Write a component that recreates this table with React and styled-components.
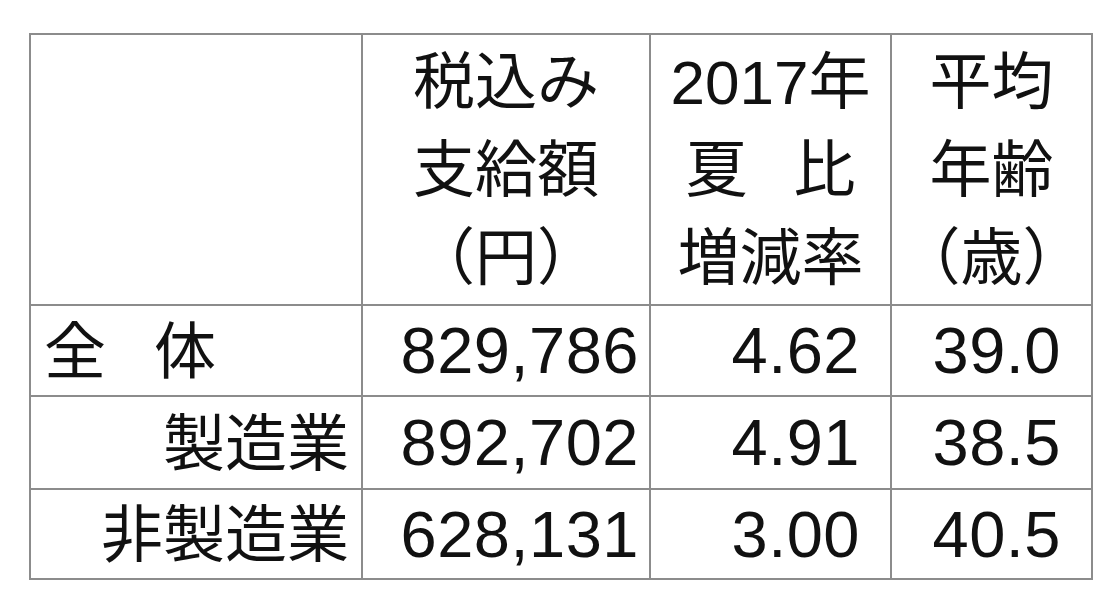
import React from "react";
import styled, { createGlobalStyle } from "styled-components";

const GlobalStyle = createGlobalStyle`
  html, body {
    margin: 0;
    padding: 0;
    background: #ffffff;
  }
  body {
    font-family: "Liberation Sans", "Noto Sans CJK JP", sans-serif;
    color: #111;
  }
`;

const Page = styled.div`
  width: 1106px;
  height: 600px;
  padding: 33px 0 0 29px;
  box-sizing: border-box;
`;

const Table = styled.table`
  border-collapse: collapse;
  table-layout: fixed;
  width: 1062px;
  font-size: 64px;
  color: #111;
`;

const Cell = styled.td`
  border: 2px solid #8c8c8c;
  padding: 0;
  vertical-align: middle;
  white-space: nowrap;
  line-height: 1;
`;

const HeadCell = styled(Cell)`
  height: 267px;
  text-align: center;
  font-size: 62px;
  line-height: 88px;
  padding-top: 2px;
`;

const HeadLine = styled.div`
  display: flex;
  justify-content: center;
  gap: ${(p) => p.$gap || 0}px;
`;

const LabelCell = styled(Cell)`
  height: ${(p) => p.$h}px;
  font-size: 62px;
  text-align: ${(p) => (p.$left ? "left" : "right")};
  padding: 4px 12px 0 13px;
`;

const Spaced = styled.span`
  display: inline-flex;
  gap: ${(p) => p.$gap}px;
`;

const NumCell = styled(Cell)`
  text-align: right;
  font-size: 65px;
  letter-spacing: 0.5px;
  padding-right: ${(p) => p.$pr}px;
`;

const rows = [
  { label: ["全", "体"], left: true, h: 85, values: ["829,786", "4.62", "39.0"] },
  { label: ["製造業"], h: 87, values: ["892,702", "4.91", "38.5"] },
  { label: ["非製造業"], h: 84, values: ["628,131", "3.00", "40.5"] },
];

const numPadding = [10, 30, 30];

export default function App() {
  return (
    <Page>
      <GlobalStyle />
      <Table>
        <colgroup>
          <col style={{ width: 332 }} />
          <col style={{ width: 288 }} />
          <col style={{ width: 241 }} />
          <col style={{ width: 201 }} />
        </colgroup>
        <tbody>
          <tr>
            <HeadCell />
            <HeadCell>
              <HeadLine>税込み</HeadLine>
              <HeadLine>支給額</HeadLine>
              <HeadLine>（円）</HeadLine>
            </HeadCell>
            <HeadCell>
              <HeadLine>2017年</HeadLine>
              <HeadLine $gap={46}>
                <span>夏</span>
                <span>比</span>
              </HeadLine>
              <HeadLine>増減率</HeadLine>
            </HeadCell>
            <HeadCell>
              <HeadLine>平均</HeadLine>
              <HeadLine>年齢</HeadLine>
              <HeadLine>（歳）</HeadLine>
            </HeadCell>
          </tr>
          {rows.map((row) => (
            <tr key={row.label.join("")}>
              <LabelCell $h={row.h} $left={row.left}>
                <Spaced $gap={48}>
                  {row.label.map((part) => (
                    <span key={part}>{part}</span>
                  ))}
                </Spaced>
              </LabelCell>
              {row.values.map((v, i) => (
                <NumCell key={i} $pr={numPadding[i]}>
                  {v}
                </NumCell>
              ))}
            </tr>
          ))}
        </tbody>
      </Table>
    </Page>
  );
}
